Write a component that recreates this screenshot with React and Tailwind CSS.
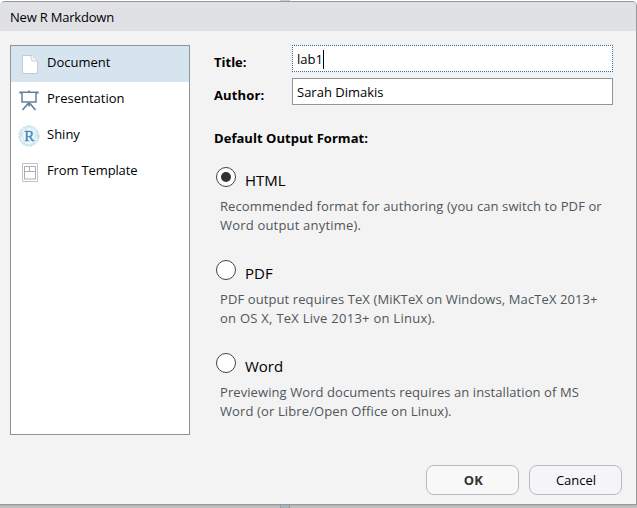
import React from "react";

function DocumentIcon() {
  return (
    <svg width="20" height="22" viewBox="0 0 20 22" fill="none">
      <path d="M2.5 2.5h10l5 5.5v12.500h-15z" fill="#fff" stroke="#c3c9cf" />
      <path d="M10.500 2.500l1.500 5.500h5.500" fill="#f1f3f5" stroke="#cdd3d8" />
    </svg>
  );
}

function PresentationIcon() {
  return (
    <svg className="-ml-[2px]" width="20" height="22" viewBox="0 0 20 22" fill="none" stroke="#66809b">
      <path d="M0.300 3.500h19.400" strokeWidth="2" />
      <path d="M3 4v9h14V4" fill="#fdfeff" strokeWidth="1.500" />
      <path d="M10 1.500v2M10 13.500v4M9.500 14l-6 7M10.500 14l6 7" strokeWidth="1.700" />
    </svg>
  );
}

function ShinyIcon() {
  return (
    <svg className="-ml-[2px] shrink-0" width="22" height="22" viewBox="0 0 22 22" fill="none">
      <circle cx="11" cy="11" r="10" fill="#f1f8fb" stroke="#b3d3e1" strokeDasharray="3 1" />
      <path d="M3 6l8-5 8 5 1 7-5 6-8 1-5-6zM3 6l4 14M19 6l-4 13M1 13l10-12 9 12" stroke="#c3dfea" strokeWidth="0.800" />
      <text x="11.200" y="16" textAnchor="middle" fontSize="15" fill="#3487bb" stroke="#3487bb" strokeWidth="0.300" fontFamily="Liberation Serif, serif">R</text>
    </svg>
  );
}

function TemplateIcon() {
  return (
    <svg width="20" height="22" viewBox="0 0 20 22" fill="none" stroke="#adadad">
      <path d="M2.500 2.500h15v18h-15z" fill="#fff" stroke="#c4c4c4" />
      <path d="M4.500 5.500h11v12.500h-11zM4.500 10.500h11M9.500 5.500v5" />
    </svg>
  );
}

const items = [
  { label: "Document", icon: DocumentIcon, cls: "" },
  { label: "Presentation", icon: PresentationIcon, cls: "" },
  { label: "Shiny", icon: ShinyIcon, cls: "" },
  { label: "From Template", icon: TemplateIcon, cls: "tracking-[-0.14px]" },
];

const formats = [
  { name: "HTML", lines: [["Recommended format for authoring (you can switch to PDF or", "tracking-[0.1px]"], ["Word output anytime).", "tracking-[0.19px]"]] },
  { name: "PDF", lines: [["PDF output requires TeX (MiKTeX on Windows, MacTeX 2013+", "tracking-[0.1px]"], ["on OS X, TeX Live 2013+ on Linux).", "tracking-[0.26px]"]] },
  { name: "Word", lines: [["Previewing Word documents requires an installation of MS", "tracking-[0.08px]"], ["Word (or Libre/Open Office on Linux).", "tracking-[0.12px]"]] },
];

export default function App() {
  return (
    <div className="flex h-[508px] w-[637px] flex-col overflow-hidden bg-white font-['Open_Sans','Noto_Sans',sans-serif] text-[13px] leading-[19px] text-black">
      <div className="flex h-px shrink-0 pl-[280px]"><div className="w-[10px] bg-[#c9cdd0]" /></div>
      <div className="flex h-[504px] shrink-0 flex-col overflow-hidden rounded-t-[5px] border-y border-r border-[#969998] bg-[#f3f3f3]">
        <div className="flex h-[29px] shrink-0 items-center bg-[#e0e1e5] pl-[10px] pt-[2px]">
          <span className="whitespace-nowrap tracking-[-0.2px]">New R Markdown</span>
        </div>
        <div className="flex h-[404px] shrink-0 pt-[14px]">
          <div className="ml-[10px] h-[390px] w-[180px] shrink-0 border border-[#8f9496] bg-white">
            {items.map(({ label, icon: Icon, cls }, i) => (
              <div key={label} className={`flex h-9 pl-2 pt-[7px] ${i === 0 ? "bg-[#d6e4f0]" : ""}`}>
                <div className="flex w-[22px] justify-center"><Icon /></div>
                <span className={`ml-[6px] whitespace-nowrap ${cls}`}>{label}</span>
              </div>
            ))}
          </div>
          <div className="ml-6 w-[400px]">
            <div className="flex h-[27px]">
              <b className="w-[78px] pt-[8px]">Title:</b>
              <div className="flex w-[321px] items-center border border-dotted border-[#44698d] bg-white pl-1 pt-px outline outline-[#e6f0f7]">
                <span>lab1</span>
                <i className="h-[19px] w-px bg-black" />
              </div>
            </div>
            <div className="mt-[6px] flex h-[27px]">
              <b className="w-[78px] pt-[8px] tracking-[0.15px]">Author:</b>
              <div className="flex w-[321px] items-center border border-[#929594] bg-white pl-1 pt-[2px]">
                <span>Sarah Dimakis</span>
              </div>
            </div>
            <div className="mt-[24px] font-bold"><span className="tracking-[0.04px]">Default Output Format:</span></div>
            <div className="mt-[19px]">
              {formats.map((f, i) => (
                <div key={f.name} className="h-[93px]">
                  <div className="flex h-[30px] pl-[2px]">
                    <div className="flex size-5 items-center justify-center rounded-full border border-[#444] bg-white">
                      {i === 0 && <div className="size-[10px] rounded-full bg-[#333]" />}
                    </div>
                    <span className="ml-[9px] pt-[4px] text-[15px]">{f.name}</span>
                  </div>
                  <div className="pl-[6px] text-[#50565b]">
                    {f.lines.map(([text, cls]) => (
                      <div key={text} className={`whitespace-nowrap ${cls}`}>{text}</div>
                    ))}
                  </div>
                </div>
              ))}
            </div>
          </div>
        </div>
        <div className="mt-[30px] flex justify-end gap-[10px] pr-[14px]">
          <div className="flex h-[30px] w-[93px] items-center justify-center rounded-[8px] border border-[#b9bbbd] bg-[#f8f8f9] pl-[2px] font-bold tracking-[0.3px] text-[#333]">OK</div>
          <div className="flex h-[30px] w-[93px] items-center justify-center rounded-[8px] border border-[#b9bbbd] bg-[#f5f5f9] pl-px">Cancel</div>
        </div>
      </div>
      <div className="flex h-[3px] shrink-0 bg-linear-to-b from-[#b5b5b5] to-[#c4c4c4] pl-[280px]"><div className="w-[10px] border-x border-[#8f9ea2] bg-[#a9b5b9]" /></div>
    </div>
  );
}
